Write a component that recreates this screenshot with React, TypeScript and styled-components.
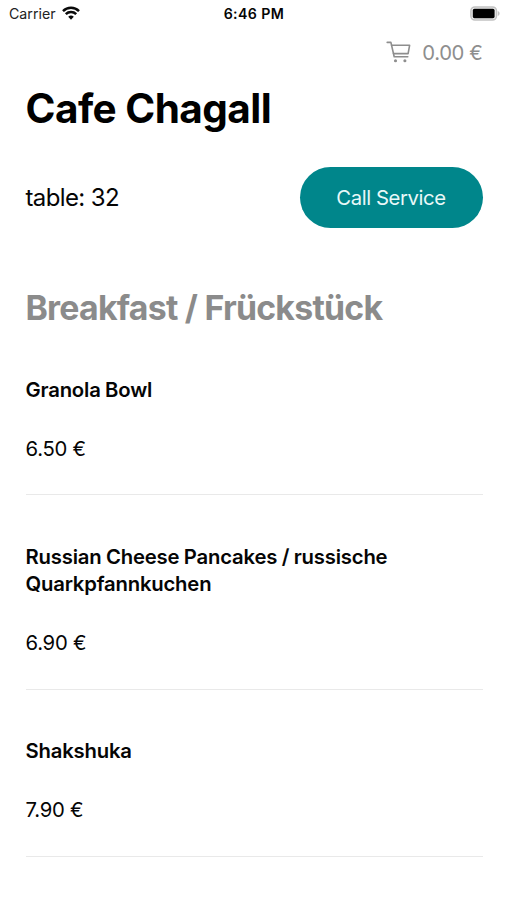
import React from "react";
import styled, { createGlobalStyle } from "styled-components";

const GlobalStyle = createGlobalStyle`
  *, *::before, *::after { box-sizing: border-box; }
  body {
    margin: 0;
    background: #fff;
    color: #050505;
    font-family: Inter, "Liberation Sans", sans-serif;
  }
`;

const Screen = styled.div`
  height: 900px;
  overflow: hidden;
  background: #fff;
`;

const StatusBar = styled.header`
  display: grid;
  grid-template-columns: 1fr auto 1fr;
  align-items: center;
  height: 27px;
  padding: 0 6px 0 9px;
  font-size: 14.2px;
  line-height: 18px;
`;

const Carrier = styled.div`
  display: flex;
  align-items: center;
  gap: 6px;
  color: #222;
`;

const WifiSlot = styled.span`
  display: flex;
  padding-bottom: 2px;
`;

const Clock = styled.time`
  font-weight: 600;
  letter-spacing: 0.4px;
  margin-left: -2px;
`;

const Battery = styled.div`
  display: flex;
  justify-content: flex-end;
`;

const Page = styled.main`
  padding: 0 24.5px 0 25.5px;
`;

const Cart = styled.div`
  display: flex;
  justify-content: flex-end;
  align-items: center;
  gap: 11px;
  height: 50px;
  color: #8e8e8e;
  font-size: 20.3px;
  letter-spacing: -0.38px;
`;

const Title = styled.h1`
  margin: 7px 0 0;
  font-size: 40.5px;
  line-height: 50px;
  font-weight: 700;
  letter-spacing: -0.54px;
  color: #000;
`;

const ServiceRow = styled.div`
  display: flex;
  align-items: center;
  justify-content: space-between;
  margin-top: 33px;
`;

const TableLabel = styled.span`
  font-size: 24px;
  letter-spacing: -0.62px;
`;

const CallButton = styled.button`
  width: 183px;
  height: 61px;
  padding: 0;
  border: 0;
  border-radius: 31px;
  background: #00868b;
  color: #e9f8f8;
  font: 400 20.3px Inter, "Liberation Sans", sans-serif;
  letter-spacing: -0.4px;
`;

const SectionTitle = styled.h2`
  margin: 59px 0 0;
  font-size: 33.8px;
  line-height: 41px;
  font-weight: 700;
  letter-spacing: -0.74px;
  color: #8b8b8b;
`;

const Menu = styled.ul`
  margin: 0;
  padding: 0;
  list-style: none;
`;

const Item = styled.li`
  padding: 48px 0 32px;
  border-bottom: 1px solid #e9e9e9;

  &:not(:first-child) {
    padding-bottom: 33px;
  }

  &:last-child {
    padding-top: 47px;
  }
`;

const ItemName = styled.h3`
  margin: 0;
  font-size: 20.3px;
  line-height: 27px;
  font-weight: 600;
  letter-spacing: -0.19px;
  word-spacing: -0.4px;
`;

const ItemPrice = styled.p`
  margin: 32px 0 0;
  font-size: 20.3px;
  line-height: 27px;
  letter-spacing: -0.24px;
`;

const items = [
  { name: "Granola Bowl", price: "6.50 €" },
  { name: "Russian Cheese Pancakes / russische Quarkpfannkuchen", price: "6.90 €" },
  { name: "Shakshuka", price: "7.90 €" },
];

const WifiIcon = () => (
  <svg width="18" height="14" viewBox="0 0 18 14" fill="none" stroke="#0a0a0a" strokeWidth="2.5">
    <path d="M1 5.1a11.4 11.4 0 0 1 16 0" />
    <path d="M3.8 8.2a7.4 7.4 0 0 1 10.4 0" />
    <path d="M9 13.7 6.2 10.8a4 4 0 0 1 5.6 0Z" fill="#0a0a0a" stroke="none" />
  </svg>
);

const BatteryIcon = () => (
  <svg width="31" height="15" viewBox="0 0 31 15">
    <rect x="0.9" y="0.9" width="25.6" height="13.2" rx="4" fill="#ededed" stroke="#c2c2c2" strokeWidth="1.5" />
    <rect x="2.8" y="2.8" width="21.8" height="9.4" rx="1.6" fill="#000" />
    <path d="M27.8 5v5c1.1-.4 1.8-1.3 1.8-2.5S28.9 5.4 27.8 5Z" fill="#c2c2c2" />
  </svg>
);

const CartIcon = () => (
  <svg width="25" height="22" viewBox="0 0 25 22" fill="none" stroke="currentColor" strokeWidth="1.6" strokeLinecap="round" strokeLinejoin="round">
    <path d="M1.2 1.4h3.7l3.3 14.4h13.6" />
    <path d="M5.6 4.3h18l-1.5 8.3H7.5" />
    <circle cx="9.5" cy="19.8" r="1.55" fill="currentColor" stroke="none" />
    <circle cx="18.9" cy="19.8" r="1.55" fill="currentColor" stroke="none" />
  </svg>
);

export default function App() {
  return (
    <Screen>
      <GlobalStyle />
      <StatusBar>
        <Carrier>
          Carrier
          <WifiSlot>
            <WifiIcon />
          </WifiSlot>
        </Carrier>
        <Clock>6:46 PM</Clock>
        <Battery>
          <BatteryIcon />
        </Battery>
      </StatusBar>
      <Page>
        <Cart>
          <CartIcon />
          <span>0.00 €</span>
        </Cart>
        <Title>Cafe Chagall</Title>
        <ServiceRow>
          <TableLabel>table: 32</TableLabel>
          <CallButton>Call Service</CallButton>
        </ServiceRow>
        <SectionTitle>Breakfast / Frückstück</SectionTitle>
        <Menu>
          {items.map((item) => (
            <Item key={item.name}>
              <ItemName>{item.name}</ItemName>
              <ItemPrice>{item.price}</ItemPrice>
            </Item>
          ))}
        </Menu>
      </Page>
    </Screen>
  );
}
